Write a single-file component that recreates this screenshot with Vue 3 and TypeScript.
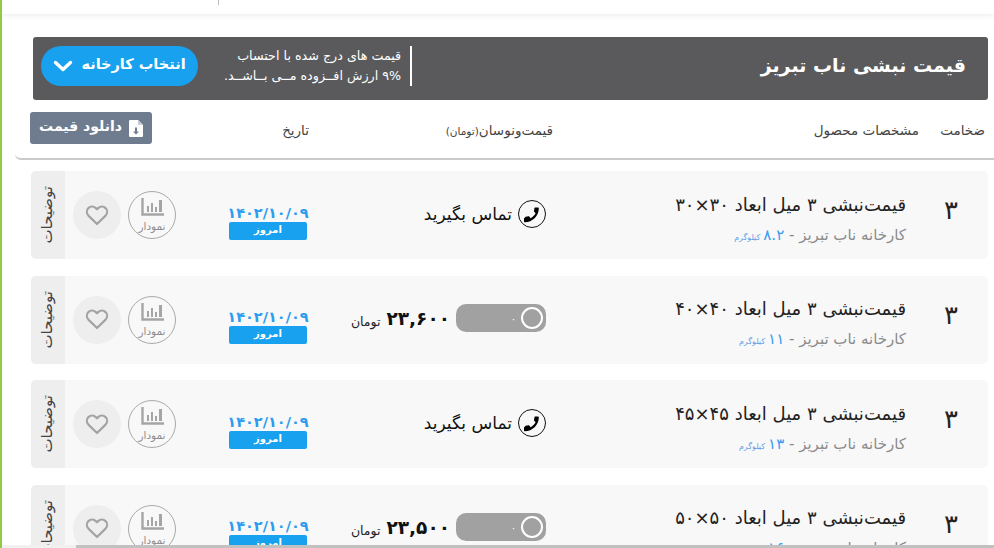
<template>
  <div class="page">
    <div class="topbar"><span class="topbar-sep"></span></div>

    <div class="content">
      <section class="banner">
        <h1 class="banner-title">قیمت نبشی ناب تبریز</h1>
        <div class="banner-side">
          <p class="banner-note">قیمت های درج شده با احتساب<br />۹% ارزش افــزوده مــی بــاشــد.</p>
          <button class="factory-btn">
            <span>انتخاب کارخانه</span>
            <svg width="20" height="12" viewBox="0 0 20 12"><path d="M2.5 2.5 10 9.5l7.5-7" fill="none" stroke="#fff" stroke-width="3.4" stroke-linecap="round" stroke-linejoin="round" /></svg>
          </button>
        </div>
      </section>

      <div class="table-head">
        <span class="label">ضخامت</span>
        <span class="label">مشخصات محصول</span>
        <span class="label">قیمت‌ونوسان<small>(تومان)</small></span>
        <span class="label">تاریخ</span>
        <button class="download-btn">
          <svg width="14" height="17" viewBox="0 0 14 17"><path d="M1 0h8l5 5v11a1 1 0 0 1-1 1H1a1 1 0 0 1-1-1V1a1 1 0 0 1 1-1z" fill="#fff" /><path d="M9 0v5h5z" fill="#c9ced6" /><path d="M6 7.5h2v4h2l-3 3-3-3h2z" fill="#6f7c8f" /></svg>
          <span>دانلود قیمت</span>
        </button>
      </div>

      <div class="rows">
        <article v-for="row in rows" :key="row.title" class="row">
          <div class="c-size">۳</div>
          <div class="c-spec">
            <div class="title">{{ row.title }}</div>
            <div class="sub">کارخانه ناب تبریز - <b>{{ row.weight }}</b><small>کیلوگرم</small></div>
          </div>
          <div class="c-price">
            <template v-if="row.price">
              <div class="toggle"><span class="knob"></span><span class="zero">۰</span></div>
              <strong class="amount">{{ row.price }}</strong>
              <span class="unit">تومان</span>
            </template>
            <template v-else>
              <span class="phone">
                <svg width="18" height="18" viewBox="0 0 24 24"><path d="M20.5 15.6c-1.3 0-2.6-.2-3.7-.6-.4-.1-.8 0-1.1.2l-1.9 2.4c-2.7-1.3-5.2-3.7-6.6-6.5L9.1 9.1c.3-.3.4-.7.3-1.1-.4-1.2-.6-2.4-.6-3.7 0-.6-.5-1.1-1.1-1.1H4.2c-.6 0-1.3.3-1.3 1.1C2.9 14.5 11.4 23 21.6 23c.8 0 1.1-.7 1.1-1.3v-3.5c0-.6-.5-1.1-1.1-1.1z" transform="translate(24 0) scale(-1 1)" fill="#000" /></svg>
              </span>
              <span class="call">تماس بگیرید</span>
            </template>
          </div>
          <div class="c-date">
            <div class="date">۱۴۰۲/۱۰/۰۹</div>
            <div class="today">امروز</div>
          </div>
          <div class="c-actions">
            <div class="chart">
              <svg width="23" height="18" viewBox="0 0 23 18"><path d="M1.5 0v16.5H23" fill="none" stroke="#a5a5a5" stroke-width="2.4" /><path d="M6 8h2v6H6zM10 5h2v9h-2zM14 9h2v5h-2zM18 2h3v12h-3z" fill="#a5a5a5" /></svg>
              <span>نمودار</span>
            </div>
            <div class="heart">
              <svg width="24" height="21" viewBox="0 0 24 21"><path d="M12 19 3.4 10.6a5.4 5.4 0 0 1 0-7.5 5.3 5.3 0 0 1 7.4 0L12 4.3l1.2-1.2a5.3 5.3 0 0 1 7.4 0 5.4 5.4 0 0 1 0 7.5z" fill="none" stroke="#a3a3a3" stroke-width="2.2" stroke-linejoin="round" /></svg>
            </div>
          </div>
          <div class="c-desc"><span>توضیحات</span></div>
        </article>
      </div>
    </div>

    <div class="scroll-track"><span class="scroll-thumb"></span></div>
  </div>
</template>

<script setup lang="ts">
interface PriceRow {
  title: string
  weight: string
  price: string | null
}

const rows: PriceRow[] = [
  { title: "قیمت‌نبشی ۳ میل ابعاد ۳۰×۳۰", weight: "۸.۲", price: null },
  { title: "قیمت‌نبشی ۳ میل ابعاد ۴۰×۴۰", weight: "۱۱", price: "۲۳,۶۰۰" },
  { title: "قیمت‌نبشی ۳ میل ابعاد ۴۵×۴۵", weight: "۱۳", price: null },
  { title: "قیمت‌نبشی ۳ میل ابعاد ۵۰×۵۰", weight: "۱۶", price: "۲۳,۵۰۰" },
]
</script>

<style>
html,
body {
  margin: 0;
  height: 100%;
  overflow: hidden;
  background: #fff;
}
</style>

<style scoped>
.page {
  position: relative;
  height: 548px;
  overflow: hidden;
  box-sizing: border-box;
  border-left: 2px solid #8fcb45;
  font-family: "DejaVu Sans", sans-serif;
  color: #333;
}

.topbar {
  height: 14px;
  box-shadow: 0 1px 6px rgba(0, 0, 0, 0.09);
}

.topbar-sep {
  display: block;
  width: 1px;
  height: 5px;
  margin-left: 216px;
  background: #bbb;
}

.content {
  direction: rtl;
  padding: 23px 6px 0 0;
}

.banner {
  display: flex;
  align-items: center;
  justify-content: space-between;
  height: 63px;
  margin: 0 0 0 31px;
  padding: 0 22px 0 8px;
  box-sizing: border-box;
  background: #5a5a5c;
  border-radius: 3px;
  color: #fff;
}

.banner-title {
  margin: 0;
  padding-bottom: 8px;
  font-size: 19px;
  font-weight: 700;
}

.banner-side {
  display: flex;
  align-items: center;
  gap: 26px;
  padding-bottom: 5px;
}

.banner-note {
  margin: 0;
  padding-right: 9px;
  border-right: 2px solid #fff;
  font-size: 12.7px;
  line-height: 20px;
  white-space: nowrap;
}

.factory-btn {
  display: flex;
  align-items: center;
  justify-content: center;
  gap: 8px;
  width: 157px;
  height: 40px;
  padding: 0;
  border: 0;
  border-radius: 20px;
  background: #18a1ee;
  color: #fff;
  font: 700 14.5px "DejaVu Sans", sans-serif;
}

.factory-btn span {
  padding-bottom: 4px;
}

.table-head {
  display: grid;
  grid-template-columns: 66px 366px 244px 157px 1fr;
  align-items: center;
  height: 60px;
  margin: 0 -6px 0 13px;
  padding: 0 9px 2px 0;
  box-sizing: border-box;
  border-bottom: 2px solid #cacaca;
  border-bottom-left-radius: 6px;
  color: #444;
  white-space: nowrap;
}

.label {
  padding-top: 4px;
  font-size: 13.5px;
}

.label small {
  font-size: 10.5px;
}

.download-btn {
  justify-self: end;
  display: flex;
  align-items: center;
  justify-content: center;
  gap: 7px;
  width: 122px;
  height: 32px;
  margin-left: 15px;
  padding: 0;
  border: 0;
  border-radius: 3px;
  background: #6f7c8f;
  color: #fff;
  font: 700 14px "DejaVu Sans", sans-serif;
}

.download-btn span {
  padding-bottom: 5px;
}

.rows {
  display: flex;
  flex-direction: column;
  gap: 16.5px;
  margin: 11px 0 0 29px;
}

.row {
  flex: none;
  display: grid;
  grid-template-columns: 82px 360px 1fr 120px 143px 34px;
  align-items: center;
  height: 88px;
  overflow: hidden;
  background: #f8f8f8;
  border-radius: 5px;
}

.c-size {
  padding: 0 0 10px 8px;
  font-size: 26px;
  text-align: center;
  color: #222;
}

.c-spec {
  margin-top: 7px;
}

.title {
  font-size: 18px;
  color: #222;
  white-space: nowrap;
}

.sub {
  margin-top: 11px;
  font-size: 15px;
  color: #8b8b8b;
  white-space: nowrap;
}

.sub b {
  font-weight: 400;
  color: #3a9bf0;
}

.sub small {
  margin-right: 3px;
  font-size: 8px;
  color: #5f9fe6;
}

.c-price {
  display: flex;
  align-items: center;
  gap: 6px;
  padding-bottom: 3px;
  white-space: nowrap;
}

.phone {
  display: flex;
  align-items: center;
  justify-content: center;
  width: 28px;
  height: 28px;
  box-sizing: border-box;
  border: 1px solid #111;
  border-radius: 50%;
}

.call {
  font-size: 17px;
  color: #111;
}

.toggle {
  display: flex;
  align-items: center;
  width: 90px;
  height: 28px;
  padding-right: 3px;
  box-sizing: border-box;
  background: #a1a1a1;
  border-radius: 10px;
}

.knob {
  width: 22px;
  height: 22px;
  box-sizing: border-box;
  border: 2px solid #fff;
  border-radius: 50%;
}

.zero {
  margin-right: 5px;
  font-size: 10px;
  color: #fff;
}

.amount {
  font-size: 18.5px;
  color: #111;
}

.unit {
  padding-top: 7px;
  font-size: 12.5px;
  color: #222;
}

.c-date {
  display: flex;
  flex-direction: column;
  align-items: center;
  margin-top: 14px;
}

.date {
  font-size: 14.5px;
  font-weight: 700;
  color: #2f9cf0;
  direction: ltr;
}

.today {
  width: 78px;
  height: 18px;
  margin-top: 1px;
  background: #18a1ee;
  border-radius: 2px;
  font-size: 10px;
  font-weight: 700;
  line-height: 16px;
  text-align: center;
  color: #fff;
}

.c-actions {
  display: flex;
  justify-content: flex-end;
  gap: 7px;
  padding-left: 8px;
}

.chart,
.heart {
  display: flex;
  flex-direction: column;
  align-items: center;
  justify-content: center;
  width: 48px;
  height: 48px;
  box-sizing: border-box;
  border-radius: 50%;
}

.chart {
  border: 1px solid #a9a9a9;
  font-size: 10.5px;
  color: #8f8f8f;
}

.chart svg {
  margin-bottom: 4px;
}

.heart {
  background: #eee;
}

.c-desc {
  display: flex;
  align-items: center;
  justify-content: center;
  height: 100%;
  padding-right: 3px;
  box-sizing: border-box;
  background: #eee;
}

.c-desc span {
  writing-mode: vertical-rl;
  transform: rotate(180deg);
  font-size: 15px;
  color: #444;
}

.scroll-track {
  position: absolute;
  left: 0;
  right: 0;
  bottom: 0;
  height: 3px;
  background: #f1f1f1;
}

.scroll-thumb {
  display: block;
  height: 100%;
  margin-left: 74px;
  background: #c1c1c1;
}
</style>
